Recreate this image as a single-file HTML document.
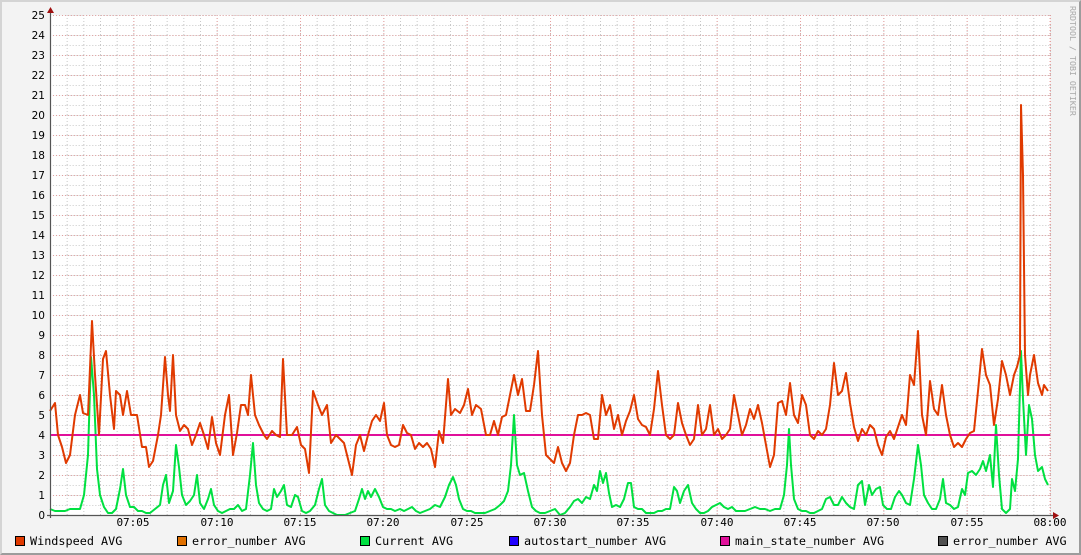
<!DOCTYPE html>
<html><head><meta charset="utf-8"><style>
html,body{margin:0;padding:0;background:#f3f3f3}
.wrap{position:relative;width:1081px;height:555px;box-sizing:border-box;border-top:2px solid #d4d4d4;border-left:2px solid #d4d4d4;border-right:2px solid #9c9c9c;border-bottom:2px solid #9c9c9c;background:#f3f3f3;overflow:hidden}
svg{position:absolute;left:-2px;top:-2px}
</style></head><body><div class="wrap">
<svg width="1081" height="555" viewBox="0 0 1081 555" xmlns="http://www.w3.org/2000/svg">
<defs>
<pattern id="minor" x="50" y="15" width="16.6667" height="10" patternUnits="userSpaceOnUse">
<line x1="0.5" y1="0" x2="0.5" y2="10" stroke="#c8c8c8" stroke-width="1" stroke-dasharray="1,2"/>
<line x1="0" y1="0.5" x2="16.6667" y2="0.5" stroke="#c8c8c8" stroke-width="1" stroke-dasharray="1,2"/>
</pattern>
<pattern id="major" x="50" y="15" width="83.3333" height="20" patternUnits="userSpaceOnUse">
<line x1="0.5" y1="0" x2="0.5" y2="20" stroke="#e8a0a0" stroke-width="1" stroke-dasharray="1,2"/>
<line x1="0" y1="0.5" x2="83.3333" y2="0.5" stroke="#e0a0a0" stroke-width="1" stroke-dasharray="1,2"/>
</pattern>
</defs>
<rect x="50" y="15" width="1000" height="500" fill="#ffffff"/>
<rect x="50" y="15" width="1001" height="500" fill="url(#minor)"/>
<rect x="50" y="15" width="1001" height="500" fill="url(#major)"/>
<g font-family="DejaVu Sans, Liberation Sans, sans-serif" font-size="10.5" fill="#000" text-anchor="end">
<text x="45" y="19">25</text><text x="45" y="39">24</text><text x="45" y="59">23</text><text x="45" y="79">22</text><text x="45" y="99">21</text><text x="45" y="119">20</text><text x="45" y="139">19</text><text x="45" y="159">18</text><text x="45" y="179">17</text><text x="45" y="199">16</text><text x="45" y="219">15</text><text x="45" y="239">14</text><text x="45" y="259">13</text><text x="45" y="279">12</text><text x="45" y="299">11</text><text x="45" y="319">10</text><text x="45" y="339">9</text><text x="45" y="359">8</text><text x="45" y="379">7</text><text x="45" y="399">6</text><text x="45" y="419">5</text><text x="45" y="439">4</text><text x="45" y="459">3</text><text x="45" y="479">2</text><text x="45" y="499">1</text><text x="45" y="519">0</text>
</g>
<g font-family="DejaVu Sans Mono, Liberation Mono, monospace" font-size="11" fill="#000" text-anchor="middle">
<text x="133" y="526">07:05</text><text x="217" y="526">07:10</text><text x="300" y="526">07:15</text><text x="383" y="526">07:20</text><text x="467" y="526">07:25</text><text x="550" y="526">07:30</text><text x="633" y="526">07:35</text><text x="717" y="526">07:40</text><text x="800" y="526">07:45</text><text x="883" y="526">07:50</text><text x="967" y="526">07:55</text><text x="1050" y="526">08:00</text>
</g>
<polyline fill="none" stroke="#00e040" stroke-width="2" stroke-linejoin="round" points="50,509 55,511 60,511 65,511 70,509 75,509 80,509 84,495 88,455 91,357 94,395 97,469 100,495 104,507 108,513 112,513 116,509 120,489 123,469 126,495 130,507 134,507 138,511 142,511 146,513 150,513 155,509 160,505 163,485 166,475 169,503 173,491 176,445 179,467 182,495 186,505 190,501 194,495 197,475 200,503 204,509 208,499 211,489 214,505 218,511 222,513 226,511 230,509 234,509 238,505 242,511 246,509 250,475 253,443 256,485 259,503 263,509 267,511 271,509 274,489 277,497 281,491 284,485 287,505 291,507 295,495 298,497 302,511 306,513 310,511 315,505 319,489 322,479 325,505 329,511 333,513 337,515 341,515 345,515 350,513 355,511 359,499 362,489 365,499 368,491 371,497 375,489 379,497 383,507 387,509 391,509 395,511 400,509 404,511 408,509 412,507 416,511 420,513 425,511 430,509 435,505 440,507 445,497 449,485 453,477 456,485 459,499 463,509 467,511 471,511 475,513 480,513 485,513 490,511 495,509 500,505 504,501 508,491 511,465 514,415 517,465 520,475 524,473 528,491 532,507 536,511 540,513 545,513 550,511 555,509 560,515 565,513 570,507 574,501 578,499 582,503 586,497 590,499 594,485 597,491 600,471 603,483 606,473 609,493 612,507 616,505 620,507 624,499 628,483 631,483 634,507 638,509 642,509 646,513 650,513 654,513 658,511 662,511 666,509 670,509 674,487 677,491 680,503 684,491 688,485 692,503 696,509 700,513 704,513 708,511 712,507 716,505 720,503 724,507 728,509 732,507 736,511 740,511 745,511 750,509 755,507 760,509 765,509 770,511 775,509 780,509 784,495 787,465 789,429 791,465 794,499 798,509 802,511 806,511 810,513 814,513 818,511 822,509 826,499 830,497 834,505 838,505 842,497 846,503 850,507 854,509 858,485 862,481 865,505 869,485 872,495 876,489 880,487 883,505 887,509 891,509 895,497 899,491 902,495 906,503 910,505 914,479 918,445 921,465 924,495 928,503 932,509 936,509 940,499 943,479 946,503 950,505 954,509 958,507 962,489 965,495 968,473 972,471 976,475 980,469 983,461 986,471 990,455 993,487 996,425 999,475 1002,509 1006,513 1010,509 1012,479 1015,491 1018,459 1021,351 1023,399 1026,455 1029,405 1032,419 1035,455 1038,471 1042,467 1045,479 1048,485"/>
<line x1="50" y1="435" x2="1050" y2="435" stroke="#e0109a" stroke-width="2"/>
<polyline fill="none" stroke="#e03a00" stroke-width="2" stroke-linejoin="round" points="50,411 55,403 58,435 62,447 66,463 70,455 75,415 80,395 83,413 88,415 92,321 95,375 99,435 103,359 106,351 110,395 114,429 116,391 120,395 123,415 127,391 131,415 137,415 142,447 146,447 149,467 153,461 158,435 161,415 165,357 168,395 170,411 173,355 176,415 180,431 184,425 188,429 192,445 196,435 200,423 204,435 208,449 212,417 216,443 220,455 225,415 229,395 233,455 237,433 241,405 245,405 248,415 251,375 255,415 259,425 264,435 267,439 272,431 276,435 280,437 283,359 287,435 292,435 297,427 301,445 305,449 309,473 313,391 318,405 322,415 327,405 331,443 336,435 340,439 344,443 348,459 352,475 356,445 360,435 364,451 368,435 372,421 376,415 380,421 384,403 387,435 391,445 395,447 399,445 403,425 407,433 411,435 415,449 419,443 423,447 427,443 431,449 435,467 439,431 443,443 448,379 451,415 455,409 460,413 464,405 468,389 472,415 476,405 481,409 486,435 490,435 494,421 498,435 502,417 506,415 510,395 514,375 518,395 522,379 526,411 530,411 534,385 538,351 542,415 546,455 550,459 554,463 558,447 562,463 566,471 570,463 574,435 578,415 582,415 586,413 590,415 594,439 598,439 602,395 606,415 610,405 614,429 618,415 622,435 626,421 630,411 634,395 638,419 642,425 646,427 650,435 654,409 658,371 662,405 666,435 670,439 674,435 678,403 682,423 686,435 690,445 694,439 698,405 702,435 706,429 710,405 714,435 718,429 722,439 726,435 730,429 734,395 738,415 742,435 746,425 750,409 754,419 758,405 762,423 766,445 770,467 774,455 778,403 782,401 786,415 790,383 794,415 798,423 802,395 806,405 810,435 814,439 818,431 822,435 826,429 830,405 834,363 838,395 842,391 846,373 850,403 854,427 858,441 862,429 866,435 870,425 874,429 878,445 882,455 886,437 890,431 894,439 898,427 902,415 906,425 910,375 914,385 918,331 922,415 926,435 930,381 934,409 938,415 942,385 946,415 950,435 954,447 958,443 962,447 966,439 970,433 974,431 978,391 982,349 986,375 990,385 994,425 998,399 1002,361 1006,375 1010,395 1014,375 1017,367 1020,355 1021,105 1023,175 1025,355 1028,395 1030,375 1034,355 1038,383 1042,395 1044,385 1048,391"/>
<line x1="50.5" y1="10" x2="50.5" y2="518" stroke="#555" stroke-width="1.2"/>
<line x1="47" y1="515.5" x2="1054" y2="515.5" stroke="#555" stroke-width="1.2"/>
<polygon points="47,13 54,13 50.5,7" fill="#a01010"/>
<polygon points="1053,512 1053,519 1059,515.5" fill="#a01010"/>
<g font-family="DejaVu Sans Mono, Liberation Mono, monospace" font-size="11.8" fill="#000">
<rect x="15.5" y="536.5" width="9" height="9" fill="#e03a00" stroke="#000"/><text x="30" y="545">Windspeed AVG</text>
<rect x="177.5" y="536.5" width="9" height="9" fill="#e07000" stroke="#000"/><text x="192" y="545">error_number AVG</text>
<rect x="360.5" y="536.5" width="9" height="9" fill="#00e040" stroke="#000"/><text x="375" y="545">Current AVG</text>
<rect x="509.5" y="536.5" width="9" height="9" fill="#2000ff" stroke="#000"/><text x="524" y="545">autostart_number AVG</text>
<rect x="720.5" y="536.5" width="9" height="9" fill="#e0109a" stroke="#000"/><text x="735" y="545">main_state_number AVG</text>
<rect x="938.5" y="536.5" width="9" height="9" fill="#505050" stroke="#000"/><text x="953" y="545">error_number AVG</text>
</g>
<text x="1070" y="6" transform="rotate(90 1070 6)" font-family="DejaVu Sans Mono, Liberation Mono, monospace" font-size="8.3" fill="#a8a8a8">RRDTOOL / TOBI OETIKER</text>
</svg>
</div></body></html>
